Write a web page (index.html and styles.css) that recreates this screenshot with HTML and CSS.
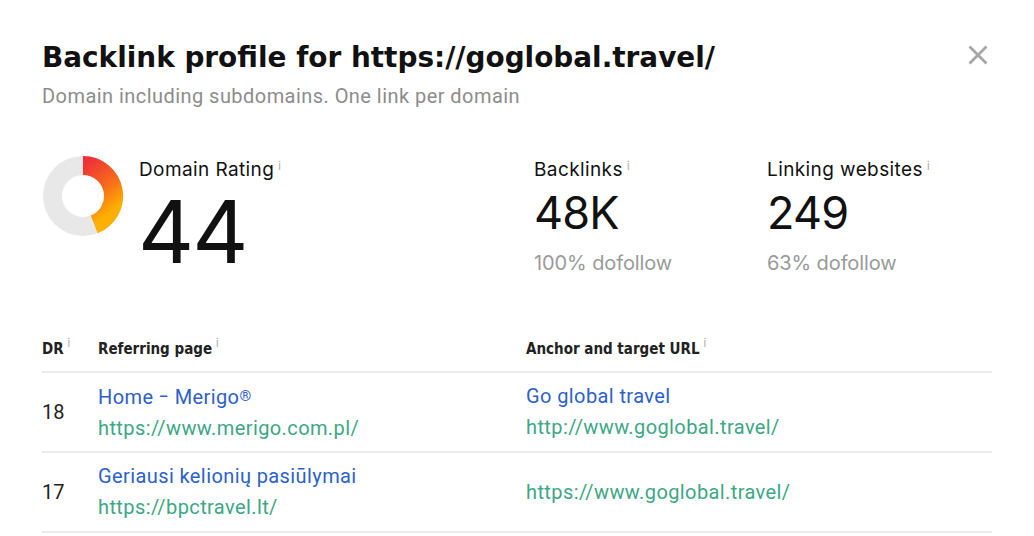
FILE: index.html
```html
<!DOCTYPE html>
<html lang="en">
<head>
<meta charset="utf-8">
<title>Backlink profile</title>
<link rel="stylesheet" href="styles.css">
</head>
<body>
<div class="modal">
  <header class="head">
    <div class="head-text">
      <h1 class="title">Backlink profile for https://goglobal.travel/</h1>
      <p class="subtitle">Domain including subdomains. One link per domain</p>
    </div>
    <button class="close" aria-label="Close">
      <svg width="20" height="20" viewBox="0 0 20 20"><path d="M2.5 2.5L17.5 17.5M17.5 2.5L2.5 17.5" stroke="#a6a6a6" stroke-width="2.8" stroke-linecap="square"/></svg>
    </button>
  </header>

  <section class="stats">
    <div class="stat stat-dr">
      <svg class="donut" width="82" height="82" viewBox="0 0 82 82">
        <defs>
          <linearGradient id="drGrad" x1="0" y1="0" x2="0.4" y2="1">
            <stop offset="0" stop-color="#ee3236"/>
            <stop offset="0.55" stop-color="#f86a1c"/>
            <stop offset="1" stop-color="#fdb000"/>
          </linearGradient>
        </defs>
        <circle cx="41" cy="41" r="30.5" fill="none" stroke="#e8e8e8" stroke-width="19"/>
        <path d="M41 10.5 A30.5 30.5 0 0 1 52.2 69.4" fill="none" stroke="url(#drGrad)" stroke-width="19"/>
      </svg>
      <div class="stat-body">
        <div class="label">Domain Rating<sup class="info">i</sup></div>
        <div class="big">44</div>
      </div>
    </div>
    <div class="stat stat-bl">
      <div class="label">Backlinks<sup class="info">i</sup></div>
      <div class="value">48K</div>
      <div class="note">100% dofollow</div>
    </div>
    <div class="stat stat-lw">
      <div class="label">Linking websites<sup class="info">i</sup></div>
      <div class="value">249</div>
      <div class="note">63% dofollow</div>
    </div>
  </section>

  <table class="links">
    <thead>
      <tr>
        <th class="c-dr">DR<sup class="info">i</sup></th>
        <th class="c-ref">Referring page<sup class="info">i</sup></th>
        <th class="c-anc">Anchor and target URL<sup class="info">i</sup></th>
      </tr>
    </thead>
    <tbody>
      <tr>
        <td class="c-dr">18</td>
        <td class="c-ref">
          <a class="ttl" href="#">Home <span class="dash">–</span> Merigo<span class="reg">®</span></a>
          <a class="url" href="#">https://www.merigo.com.pl/</a>
        </td>
        <td class="c-anc">
          <a class="ttl" href="#">Go global travel</a>
          <a class="url" href="#">http://www.goglobal.travel/</a>
        </td>
      </tr>
      <tr>
        <td class="c-dr">17</td>
        <td class="c-ref">
          <a class="ttl" href="#">Geriausi kelionių pasiūlymai</a>
          <a class="url" href="#">https://bpctravel.lt/</a>
        </td>
        <td class="c-anc">
          <a class="url" href="#">https://www.goglobal.travel/</a>
        </td>
      </tr>
    </tbody>
  </table>
</div>
</body>
</html>
```

FILE: styles.css
```css
html, body {
  margin: 0;
  padding: 0;
  background: #fff;
}

body {
  font-family: "Inter", "Roboto", sans-serif;
  color: #111;
}

.modal {
  padding: 38px 42px 0 42px;
  width: 950px;
}

.head {
  display: flex;
  justify-content: space-between;
  align-items: flex-start;
}

.title {
  margin: 0;
  font-family: "DejaVu Sans", sans-serif;
  font-weight: bold;
  font-size: 27.9px;
  line-height: 40px;
  color: #111;
}

.subtitle {
  margin: 6px 0 0;
  font-family: "Roboto", sans-serif;
  font-size: 20px;
  line-height: 24px;
  color: #8c8c8c;
  letter-spacing: 0.45px;
}

.close {
  border: 0;
  background: none;
  padding: 0;
  margin: 7px 4px 0 0;
  width: 20px;
  height: 20px;
  cursor: pointer;
}

.close svg {
  display: block;
}

.stats {
  display: flex;
  margin-top: 50px;
  height: 160px;
}

.stat-dr {
  display: flex;
  gap: 15px;
  width: 492px;
}

.donut {
  margin-top: -3px;
  flex: none;
}

.label {
  font-size: 19px;
  line-height: 24px;
  color: #111;
  letter-spacing: 0.4px;
}

.info {
  font-size: 11px;
  color: #aaa;
  vertical-align: top;
  margin-left: 4px;
  position: relative;
  top: -4px;
  letter-spacing: 0;
}

.big {
  font-size: 87px;
  line-height: 90px;
  font-weight: 400;
  margin-top: 5px;
  margin-left: -1px;
  letter-spacing: -2px;
}

.stat-bl {
  width: 233px;
}

.value {
  font-size: 45px;
  line-height: 50px;
  margin-top: 6px;
  letter-spacing: -0.8px;
}

.note {
  margin-top: 13px;
  font-size: 20px;
  line-height: 24px;
  color: #9a9a9a;
  letter-spacing: -0.1px;
}

.links {
  width: 950px;
  border-collapse: collapse;
}

.links th {
  text-align: left;
  font-family: "DejaVu Sans Condensed", "DejaVu Sans", sans-serif;
  font-weight: bold;
  font-size: 15px;
  color: #222;
  height: 40px;
  padding: 0 0 13px 0;
  vertical-align: bottom;
  border-bottom: 2px solid #ececec;
}

.links th .info {
  font-family: "Inter", sans-serif;
  font-weight: 400;
}

.links td {
  border-bottom: 2px solid #ececec;
  height: 78px;
  padding: 0;
  vertical-align: middle;
  font-family: "Roboto", sans-serif;
  font-size: 20px;
  letter-spacing: 0.4px;
}

.c-dr {
  width: 56px;
}

.c-ref {
  width: 428px;
}

.links td.c-dr {
  color: #222;
  letter-spacing: 0;
}

.links a {
  display: block;
  text-decoration: none;
  line-height: 31px;
}

.dash {
  display: inline-block;
  transform: scaleX(0.75);
  margin: 0 -1.5px;
}

.reg {
  font-size: 15px;
  vertical-align: 3px;
}

.ttl {
  color: #2d5fcd;
}

.url {
  color: #3ca784;
}
```
